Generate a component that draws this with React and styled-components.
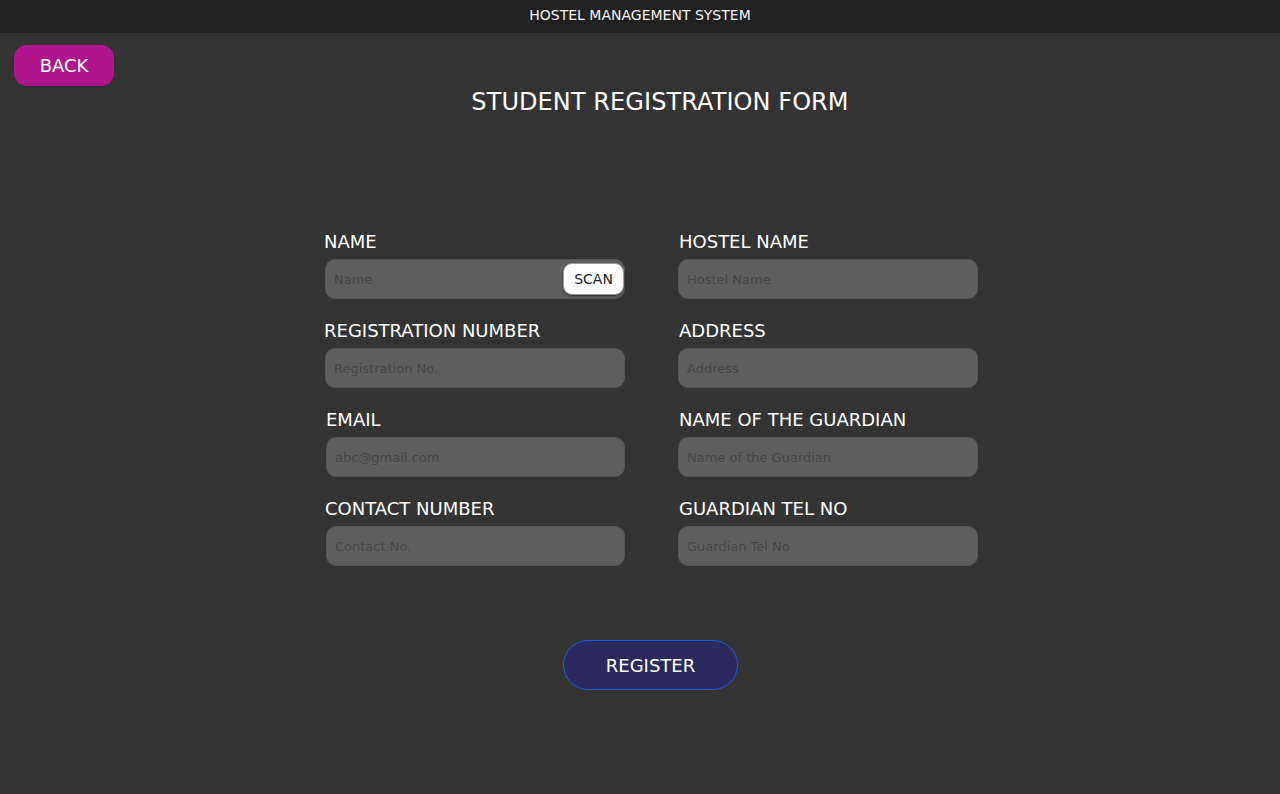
import React from 'react';
import styled, { createGlobalStyle } from 'styled-components';

const GlobalStyle = createGlobalStyle`
  html, body {
    margin: 0;
    padding: 0;
    background: #333333;
    font-family: "DejaVu Sans", "Liberation Sans", sans-serif;
  }
`;

const Page = styled.div`
  min-height: 794px;
  background: #333333;
  color: #ffffff;
`;

const TopBar = styled.div`
  box-sizing: border-box;
  height: 33px;
  padding-bottom: 4px;
  background: #212121;
  display: flex;
  align-items: center;
  justify-content: center;
  font-size: 14px;
  color: #f2f2f2;
`;

const BackRow = styled.div`
  padding: 12px 14px 0;
`;

const BackButton = styled.button`
  width: 100px;
  height: 41px;
  border: none;
  border-radius: 13px;
  background: #b0158e;
  color: #ffffff;
  font-family: inherit;
  font-size: 18px;
  cursor: pointer;
`;

const Title = styled.h1`
  margin: 2px 0 0;
  padding-left: 40px;
  text-align: center;
  font-size: 24px;
  font-weight: normal;
  line-height: 28px;
  letter-spacing: 0.08px;
  color: #ffffff;
`;

const FormGrid = styled.div`
  margin-top: 115px;
  padding-left: 23px;
  display: grid;
  grid-template-columns: 300px 300px;
  column-gap: 53px;
  row-gap: 21px;
  justify-content: center;
`;

const Field = styled.div`
  display: flex;
  flex-direction: column;
  margin-left: ${p => p.$shift || 0}px;
`;

const Label = styled.label`
  font-size: 18px;
  line-height: 22px;
  color: #ffffff;
  margin-bottom: 6px;
  margin-left: ${p => p.$nudge || 0}px;
`;

const InputWrap = styled.div`
  position: relative;
  height: 40px;
`;

const Input = styled.input`
  box-sizing: border-box;
  width: 100%;
  height: 40px;
  padding: 0 8px;
  border: 1px solid #555555;
  border-radius: 10px;
  background: #5e5e5e;
  color: #e0e0e0;
  font-family: inherit;
  font-size: 13px;
  outline: none;

  &::placeholder {
    color: #454545;
  }
`;

const ScanButton = styled.button`
  position: absolute;
  right: 1px;
  top: 4px;
  width: 61px;
  height: 32px;
  border: 1px solid #9a9a9a;
  border-radius: 9px;
  background: #ffffff;
  box-shadow: 0 1px 2px rgba(0, 0, 0, 0.5);
  color: #222222;
  font-family: inherit;
  font-size: 14px;
  cursor: pointer;
`;

const Footer = styled.div`
  display: flex;
  justify-content: center;
  padding-left: 21px;
  margin-top: 74px;
`;

const RegisterButton = styled.button`
  width: 175px;
  height: 50px;
  border: 1px solid #1a5fe0;
  border-radius: 25px;
  background: #2a2a5e;
  color: #ffffff;
  font-family: inherit;
  font-size: 18px;
  cursor: pointer;
`;

const fields = [
  { label: 'NAME', placeholder: 'Name', scan: true, nudge: -1 },
  { label: 'HOSTEL NAME', placeholder: 'Hostel Name', nudge: 1 },
  { label: 'REGISTRATION NUMBER', placeholder: 'Registration No.', nudge: -1 },
  { label: 'ADDRESS', placeholder: 'Address', nudge: 1 },
  { label: 'EMAIL', placeholder: 'abc@gmail.com', shift: 1 },
  { label: 'NAME OF THE GUARDIAN', placeholder: 'Name of the Guardian', nudge: 1 },
  { label: 'CONTACT NUMBER', placeholder: 'Contact No.', shift: 1, nudge: -1 },
  { label: 'GUARDIAN TEL NO', placeholder: 'Guardian Tel No', nudge: 1 },
];

export default function App() {
  return (
    <Page>
      <GlobalStyle />
      <TopBar>HOSTEL MANAGEMENT SYSTEM</TopBar>
      <BackRow>
        <BackButton>BACK</BackButton>
      </BackRow>
      <Title>STUDENT REGISTRATION FORM</Title>

      <FormGrid>
        {fields.map(f => (
          <Field key={f.label} $shift={f.shift}>
            <Label $nudge={f.nudge}>{f.label}</Label>
            <InputWrap>
              <Input placeholder={f.placeholder} />
              {f.scan ? <ScanButton>SCAN</ScanButton> : null}
            </InputWrap>
          </Field>
        ))}
      </FormGrid>

      <Footer>
        <RegisterButton>REGISTER</RegisterButton>
      </Footer>
    </Page>
  );
}
